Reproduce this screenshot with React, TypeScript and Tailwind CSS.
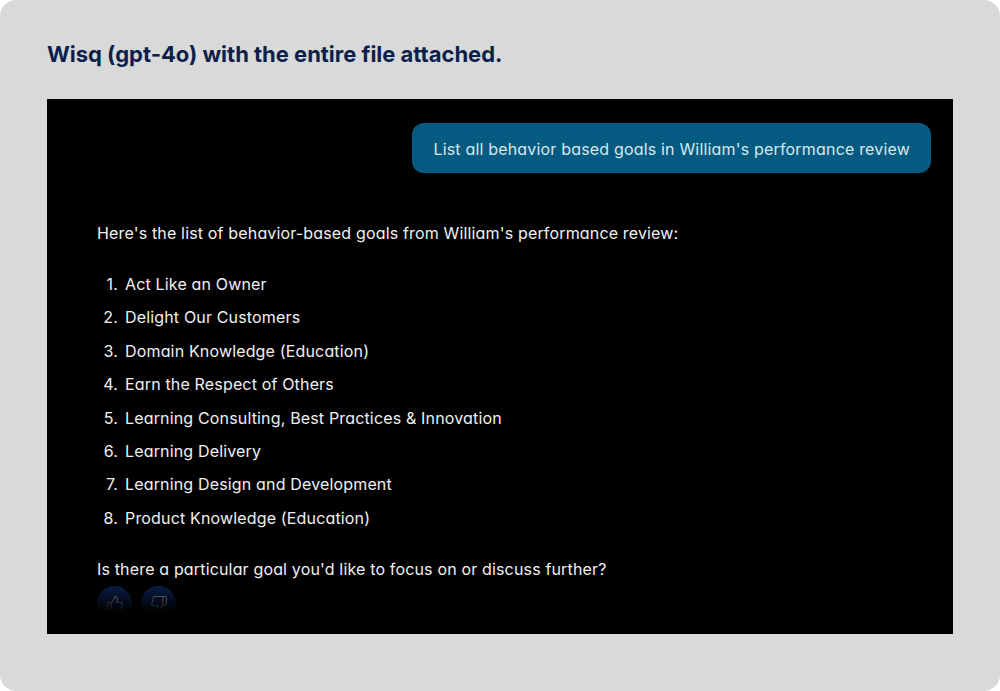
import { ThumbsDown, ThumbsUp } from "lucide-react"

const goals = [
    "Act Like an Owner",
    "Delight Our Customers",
    "Domain Knowledge (Education)",
    "Earn the Respect of Others",
    "Learning Consulting, Best Practices & Innovation",
    "Learning Delivery",
    "Learning Design and Development",
    "Product Knowledge (Education)",
]

export default function App() {
    return (
        <div className="w-[1000px] h-[691px] bg-white overflow-hidden">
            <div className="h-full rounded-2xl bg-[#d9d9d9] pt-[40px] px-[47px]">
                <h1 className="font-['Inter',sans-serif] text-[22px] leading-[28px] font-bold tracking-[-0.02px] text-[#0b1f4b]">
                    Wisq (gpt-4o) with the entire file attached.
                </h1>
                <div className="relative mt-[31px] h-[535px] bg-black overflow-hidden font-['Inter',sans-serif] text-[16px] tracking-[0.16px] text-[#f0f0f0] [font-feature-settings:'cv11']">
                    <div className="flex justify-end pt-[24px] pr-[22px]">
                        <div className="h-[50px] px-[21px] pt-[1px] rounded-xl bg-[#045a80] flex items-center tracking-[0.18px] text-[#d7e8f0]">
                            List all behavior based goals in William's performance review
                        </div>
                    </div>
                    <div className="pl-[50px] pt-[48px]">
                        <p className="leading-[24px]">Here's the list of behavior-based goals from William's performance review:</p>
                        <ol className="mt-[27px] space-y-[9.4px]">
                            {goals.map((goal, i) => (
                                <li key={goal} className="flex leading-[24px]">
                                    <span className="w-[28px] text-right pr-[7px]">{i + 1}.</span>
                                    <span>{goal}</span>
                                </li>
                            ))}
                        </ol>
                        <p className="mt-[27.5px] leading-[24px]">Is there a particular goal you'd like to focus on or discuss further?</p>
                        <div className="flex gap-[9px] mt-[5px]">
                            <button className="size-[35px] rounded-full bg-[#0a2352] flex items-center justify-center">
                                <ThumbsUp className="size-[18px] text-[#9aa3b5]" strokeWidth={1.5} />
                            </button>
                            <button className="size-[35px] rounded-full bg-[#0a2352] flex items-center justify-center">
                                <ThumbsDown className="size-[18px] text-[#9aa3b5]" strokeWidth={1.5} />
                            </button>
                        </div>
                    </div>
                    <div className="absolute left-0 right-0 bottom-0 h-[50px] bg-gradient-to-b from-black/10 to-black to-[56%]" />
                </div>
            </div>
        </div>
    )
}
